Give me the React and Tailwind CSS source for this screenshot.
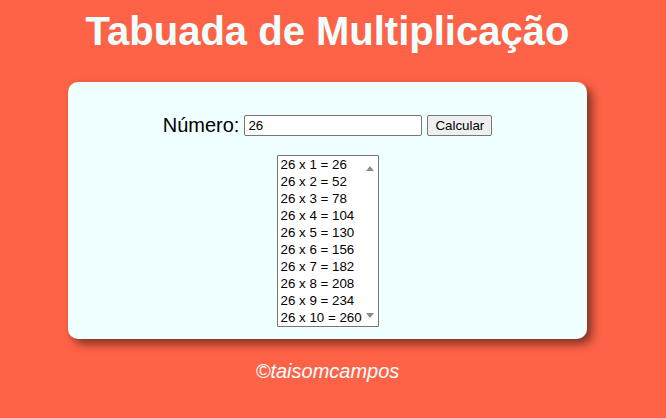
export default function App() {
  const n = 26;
  const rows = Array.from({ length: 10 }, (_, i) => `${n} x ${i + 1} = ${n * (i + 1)}`);
  return (
    <div className="min-h-[418px] w-full bg-[#ff6347] font-['Liberation_Sans',Arial,sans-serif]">
      <div className="w-[655px] flex flex-col items-center">
        <h1 className="text-[40px] font-bold text-[#f0ffff] leading-[46px] pt-[8px]">Tabuada de Multiplicação</h1>
        <div className="mt-[28px] w-[519px] h-[257px] rounded-[10px] bg-[#f0ffff] shadow-[5px_5px_10px_rgba(0,0,0,0.5)] flex flex-col items-center pt-[28px]">
          <div className="flex items-center gap-[5px]">
            <label className="text-[20px] text-black">Número:</label>
            <input
              type="text"
              defaultValue="26"
              className="w-[178px] h-[21px] border border-[#767676] rounded-[2px] bg-white px-[3px] text-[13.33px] text-black"
            />
            <button className="h-[21px] px-[7px] border border-[#767676] rounded-[2px] bg-[#efefef] text-[13.33px] text-black">Calcular</button>
          </div>
          <div
            role="listbox"
            className="mt-[15px] w-[102px] h-[172px] border border-[#767676] rounded-[1px] bg-white text-[13.33px] text-black flex overflow-hidden"
          >
            <div className="flex-1 flex flex-col">
              {rows.map((r) => (
                <div key={r} role="option" className="h-[17px] leading-[17px] pl-[3px] whitespace-nowrap">{r}</div>
              ))}
            </div>
            <div className="w-[15px] flex flex-col justify-between items-center pt-[10px] pb-[8px] bg-white">
              <svg width="8" height="5" viewBox="0 0 8 5"><polygon points="4,0 8,5 0,5" fill="#8c8c8c" /></svg>
              <svg width="8" height="5" viewBox="0 0 8 5"><polygon points="0,0 8,0 4,5" fill="#8c8c8c" /></svg>
            </div>
          </div>
        </div>
        <p className="mt-[17px] text-[20px] italic text-[#f0ffff]">©taisomcampos</p>
      </div>
    </div>
  );
}
